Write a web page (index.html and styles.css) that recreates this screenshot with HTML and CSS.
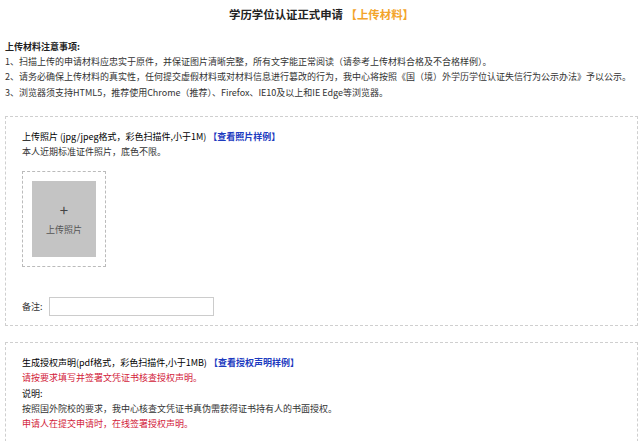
FILE: index.html
```html
<!DOCTYPE html>
<html lang="zh-CN">
<head>
  <meta charset="UTF-8" />
  <meta name="viewport" content="width=device-width, initial-scale=1.0" />
  <title>学历学位认证正式申请</title>
  <link rel="stylesheet" href="styles.css">
</head>
<body>
  <h1 class="page-title">学历学位认证正式申请 <span class="step">【上传材料】</span></h1>

  <div class="notes">
    <div class="notes-title">上传材料注意事项:</div>
    <p>1、扫描上传的申请材料应忠实于原件，并保证图片清晰完整，所有文字能正常阅读（请参考上传材料合格及不合格样例）。</p>
    <p>2、请务必确保上传材料的真实性，任何提交虚假材料或对材料信息进行篡改的行为，我中心将按照《国（境）外学历学位认证失信行为公示办法》予以公示。</p>
    <p>3、浏览器须支持HTML5，推荐使用Chrome（推荐）、Firefox、IE10及以上和IE Edge等浏览器。</p>
  </div>

  <div class="section">
    <div class="section-title">上传照片 (jpg/jpeg格式，彩色扫描件,小于1M) <a class="sample" href="#">【查看照片样例】</a></div>
    <p>本人近期标准证件照片，底色不限。</p>
    <div class="upload">
      <div class="upload-inner">
        <span class="plus">+</span>
        <span>上传照片</span>
      </div>
    </div>
    <div class="remark">
      <label for="remark">备注:</label>
      <input type="text" id="remark" />
    </div>
  </div>

  <div class="section section-last">
    <div class="section-title">生成授权声明(pdf格式，彩色扫描件,小于1MB) <a class="sample" href="#">【查看授权声明样例】</a></div>
    <p class="red">请按要求填写并签署文凭证书核查授权声明。</p>
    <p class="label">说明:</p>
    <p>按照国外院校的要求，我中心核查文凭证书真伪需获得证书持有人的书面授权。</p>
    <p class="red">申请人在提交申请时，在线签署授权声明。</p>
  </div>
</body>
</html>
```

FILE: styles.css
```css
body {
  margin: 0;
  padding: 0 6px 0 5px;
  font-family: "Noto Sans CJK SC", "Noto Sans", sans-serif;
  font-size: 9px;
  line-height: 15.2px;
  color: #333;
  background: #fff;
}
p {
  margin: 0;
}
.page-title {
  margin: 0;
  padding-top: 6px;
  font-size: 11.4px;
  line-height: 16px;
  text-align: center;
  color: #222;
}
.page-title .step {
  color: #f3a42a;
}
.notes {
  margin-top: 17px;
}
.notes-title {
  font-weight: bold;
  color: #222;
}
.section {
  margin-top: 16px;
  border: 1px dashed #cfcfcf;
  padding: 12px 16px 9px;
}
.section-last {
  padding-bottom: 20px;
}
.section-title {
  color: #000;
}
.sample {
  color: #1d3bbf;
  font-weight: bold;
  text-decoration: none;
}
.upload {
  margin-top: 12px;
  width: 64px;
  padding: 9px;
  border: 1px dashed #bbb;
}
.upload-inner {
  height: 76px;
  background: #c4c4c4;
  color: #555;
  display: flex;
  flex-direction: column;
  align-items: center;
  justify-content: center;
  gap: 4px;
}
.plus {
  font-size: 15px;
  line-height: 16px;
  color: #444;
}
.remark {
  margin-top: 30px;
  display: flex;
  align-items: center;
  gap: 6px;
}
.remark input {
  width: 165px;
  height: 19px;
  box-sizing: border-box;
  border: 1px solid #ccc;
  margin: 0;
  padding: 0 4px;
  font-size: 9px;
}
.red {
  color: #d21a3a;
}
.label {
  color: #111;
}
```
